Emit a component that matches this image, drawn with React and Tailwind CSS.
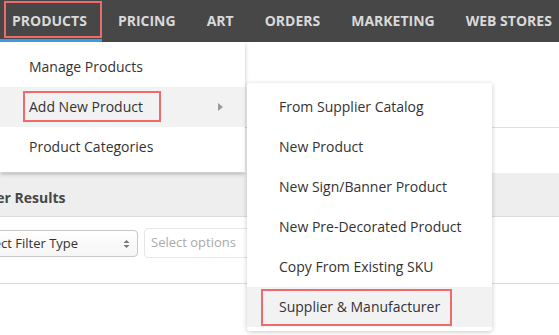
import React from "react";

const NAV = ["Products", "Pricing", "Art", "Orders", "Marketing", "Web Stores"];
const MAIN_MENU = ["Manage Products", "Add New Product", "Product Categories"];
const SUB_MENU = [
  "From Supplier Catalog",
  "New Product",
  "New Sign/Banner Product",
  "New Pre-Decorated Product",
  "Copy From Existing SKU",
  "Supplier & Manufacturer",
];

export default function App() {
  return (
    <div
      className="relative w-[559px] h-[335px] overflow-hidden bg-white text-[#333]"
      style={{ fontFamily: "'Open Sans', 'Liberation Sans', sans-serif" }}
    >
      {/* Top nav */}
      <nav className="flex h-[42px] bg-[#474747]">
        {NAV.map((item, i) => (
          <div
            key={item}
            className={`flex items-center px-[15.5px] pb-[2px] text-[14px] font-bold uppercase whitespace-nowrap text-[#d9d9d9] ${
              i === 0 ? "border-b-[3px] border-[#3f9de8] pl-[12px] pt-[3px]" : ""
            }`}
          >
            {item}
          </div>
        ))}
      </nav>

      {/* Page behind the menus */}
      <div className="h-[86px] border-b border-[#dedede]" />
      <div className="h-[45px]" />
      <div className="h-[44px] bg-[#eeeeee] border-b border-[#dcdcdc] flex items-center pt-[5px]">
        <span className="-ml-[26px] text-[14px] font-bold text-[#474747] whitespace-nowrap">
          Filter Results
        </span>
      </div>
      <div className="h-[67px] border-b border-[#dcdcdc] flex items-start gap-[6px] pt-[11px]">
        <div className="mt-[2px] -ml-[35px] w-[173px] h-[27px] shrink-0 rounded-[4px] border border-[#c8c8c8] bg-gradient-to-b from-white to-[#f5f5f5] flex items-center justify-between pl-[10px] pr-[7px] text-[13px] text-[#333]">
          <span className="whitespace-nowrap">Select Filter Type</span>
          <svg width="7" height="10" viewBox="0 0 7 10" className="text-[#777]">
            <path d="M3.5 1 L6.5 4 L0.5 4 Z" fill="currentColor" />
            <path d="M3.5 9 L6.5 6 L0.5 6 Z" fill="currentColor" />
          </svg>
        </div>
        <div className="w-[300px] h-[30px] shrink-0 rounded-[4px] border border-[#e6e6e6] flex items-center pl-[6px] text-[13px] text-[#aaaaaa]">
          Select options
        </div>
      </div>

      {/* Products dropdown */}
      <div className="absolute left-0 top-[42px] w-[245px] py-[5px] bg-white shadow-[0_2px_4px_rgba(0,0,0,0.25)]">
        {MAIN_MENU.map((item, i) => (
          <div
            key={item}
            className={`relative h-[40px] flex items-center justify-between pl-[29px] pr-[22px] pb-[1px] text-[14px] ${
              i === 1 ? "bg-[#f2f2f2]" : ""
            }`}
          >
            <span>{item}</span>
            {i === 1 && (
              <svg width="5" height="8" viewBox="0 0 5 8">
                <path d="M0 0 L5 4 L0 8 Z" fill="#9a9a9a" />
              </svg>
            )}
          </div>
        ))}
      </div>

      {/* Submenu */}
      <div className="absolute left-[247px] top-[83px] w-[245px] py-[4px] bg-white rounded-[3px] shadow-[0_1px_5px_rgba(0,0,0,0.22)]">
        {SUB_MENU.map((item, i) => (
          <div
            key={item}
            className={`h-[40px] flex items-center pl-[32px] pb-[1px] text-[14px] whitespace-nowrap ${
              i === 5 ? "bg-[#f2f2f2]" : ""
            }`}
          >
            {item}
          </div>
        ))}
      </div>

      {/* Annotation boxes */}
      <div className="absolute left-[4px] top-[1px] w-[98px] h-[37px] border-2 border-[#ef6b6b]" />
      <div className="absolute left-[23px] top-[91px] w-[138px] h-[31px] border-2 border-[#ef6b6b]" />
      <div className="absolute left-[261px] top-[289px] w-[191px] h-[37px] border-2 border-[#ef6b6b]" />
    </div>
  );
}
